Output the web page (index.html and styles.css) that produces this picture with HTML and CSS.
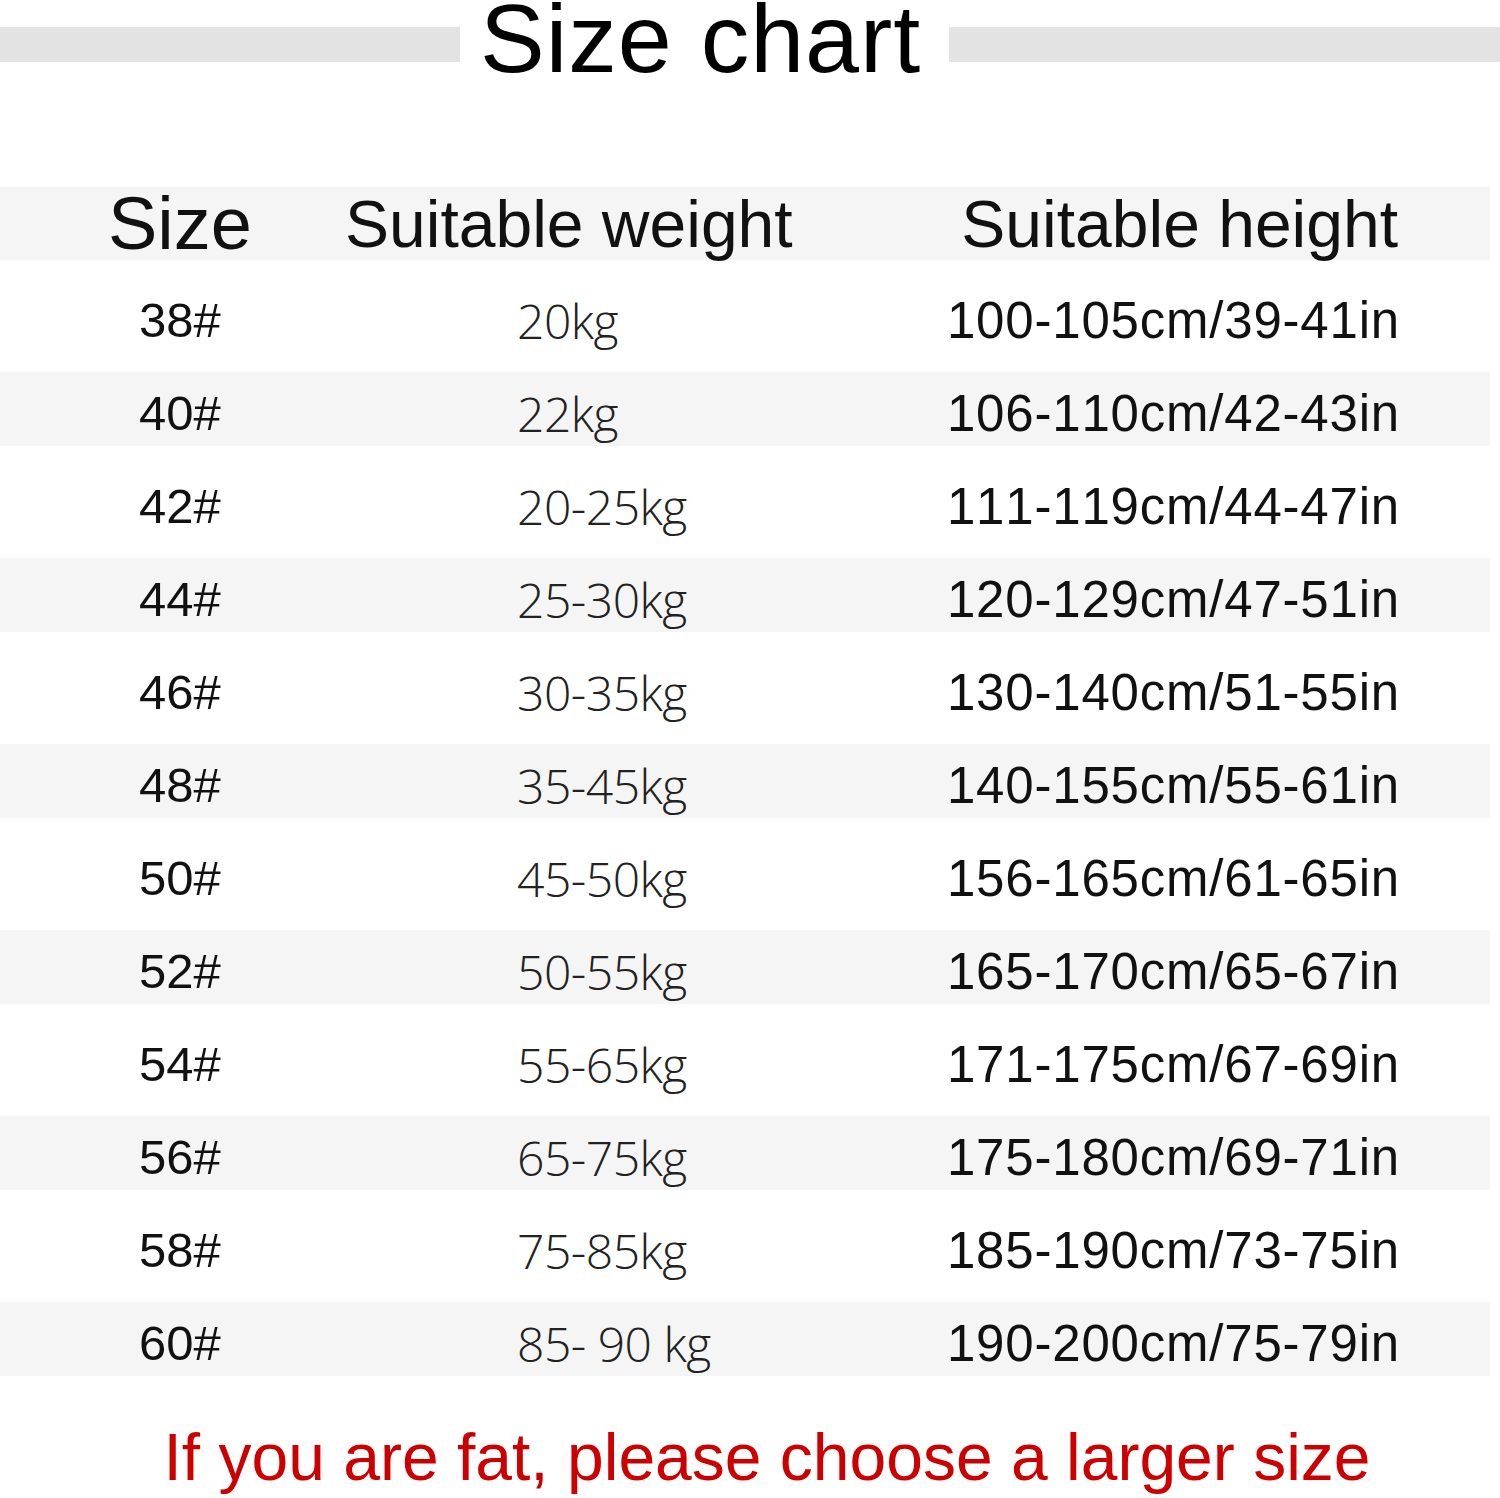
FILE: index.html
```html
<!DOCTYPE html>
<html lang="en">
<head>
<meta charset="utf-8">
<title>Size chart</title>
<link rel="stylesheet" href="styles.css">
</head>
<body>
<div class="page">
  <div class="title-row">
    <div class="bar bar-left"></div>
    <h1 class="title">Size chart</h1>
    <div class="bar bar-right"></div>
  </div>

  <div class="table">
    <div class="row head">
      <div class="c1 h-size">Size</div>
      <div class="c2 h-weight">Suitable weight</div>
      <div class="c3 h-height">Suitable height</div>
    </div>
    <div class="row"><div class="c1">38#</div><div class="c2">20kg</div><div class="c3">100-105cm/39-41in</div></div>
    <div class="row alt"><div class="c1">40#</div><div class="c2">22kg</div><div class="c3">106-110cm/42-43in</div></div>
    <div class="row"><div class="c1">42#</div><div class="c2">20-25kg</div><div class="c3">111-119cm/44-47in</div></div>
    <div class="row alt"><div class="c1">44#</div><div class="c2">25-30kg</div><div class="c3">120-129cm/47-51in</div></div>
    <div class="row"><div class="c1">46#</div><div class="c2">30-35kg</div><div class="c3">130-140cm/51-55in</div></div>
    <div class="row alt"><div class="c1">48#</div><div class="c2">35-45kg</div><div class="c3">140-155cm/55-61in</div></div>
    <div class="row"><div class="c1">50#</div><div class="c2">45-50kg</div><div class="c3">156-165cm/61-65in</div></div>
    <div class="row alt"><div class="c1">52#</div><div class="c2">50-55kg</div><div class="c3">165-170cm/65-67in</div></div>
    <div class="row"><div class="c1">54#</div><div class="c2">55-65kg</div><div class="c3">171-175cm/67-69in</div></div>
    <div class="row alt"><div class="c1">56#</div><div class="c2">65-75kg</div><div class="c3">175-180cm/69-71in</div></div>
    <div class="row"><div class="c1">58#</div><div class="c2">75-85kg</div><div class="c3">185-190cm/73-75in</div></div>
    <div class="row alt"><div class="c1">60#</div><div class="c2">85- 90 kg</div><div class="c3">190-200cm/75-79in</div></div>
  </div>

  <p class="note">If you are fat, please choose a larger size</p>
</div>
</body>
</html>
```

FILE: styles.css
```css
html, body {
  margin: 0;
  padding: 0;
  background: #ffffff;
}

.page {
  width: 1500px;
  font-family: "Liberation Sans", Arial, sans-serif;
  color: #111111;
}

.title-row {
  display: flex;
  align-items: flex-start;
  height: 78px;
}

.bar {
  height: 35px;
  margin-top: 27px;
  background: #e3e3e3;
}

.bar-left {
  width: 460px;
}

.bar-right {
  flex: 1;
}

.title {
  margin: 0 28px 0 20px;
  font-family: "Liberation Sans", Arial, sans-serif;
  font-weight: 400;
  font-size: 97px;
  line-height: 78px;
  letter-spacing: 1px;
  color: #000000;
  white-space: nowrap;
}

.table {
  width: 1490px;
  margin-top: 109px;
}

.row {
  display: grid;
  grid-template-columns: 360px 1fr 590px;
  align-items: center;
  height: 112px;
  padding-top: 8px;
  box-sizing: border-box;
}

.row.alt,
.row.head {
  height: 74px;
  background: #f5f5f5;
}

.row.head {
  height: 73px;
  padding-top: 0;
  line-height: 1;
}

.c1 {
  text-align: center;
  font-size: 49px;
  color: #111111;
}

.c2 {
  padding-left: 157px;
  font-family: "Open Sans", "Noto Sans", sans-serif;
  font-weight: 300;
  font-size: 48px;
  letter-spacing: -0.5px;
  color: #222222;
  white-space: nowrap;
}

.c3 {
  text-align: right;
  padding-right: 90px;
  font-size: 51px;
  letter-spacing: 0.8px;
  font-kerning: none;
  color: #111111;
  white-space: nowrap;
}

.h-size {
  font-size: 74px;
}

.h-weight {
  margin-left: -15px;
  padding-left: 0;
  font-family: "Liberation Sans", Arial, sans-serif;
  font-weight: 400;
  font-size: 66px;
  letter-spacing: 0;
  color: #111111;
}

.h-height {
  font-size: 66px;
  letter-spacing: 0;
  padding-right: 92px;
}

.note {
  margin: 43px 0 0 0;
  padding-left: 34px;
  text-align: center;
  font-family: "Liberation Sans", Arial, sans-serif;
  font-size: 66px;
  color: #cc0000;
  white-space: nowrap;
}
```
